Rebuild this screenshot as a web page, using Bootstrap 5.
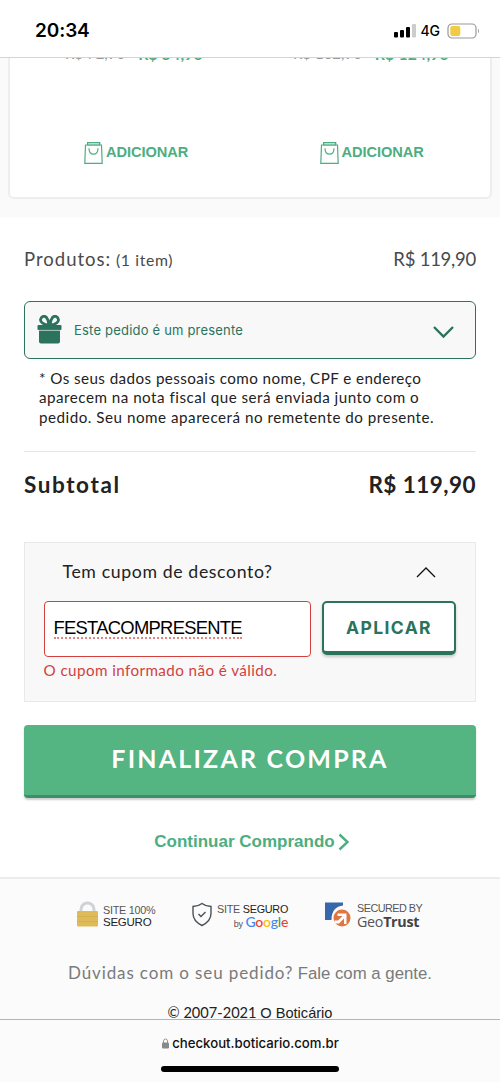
<!DOCTYPE html>
<html lang="pt-BR">
<head>
<meta charset="utf-8">
<meta name="viewport" content="width=device-width, initial-scale=1">
<title>Checkout - O Boticário</title>
<link href="https://cdn.jsdelivr.net/npm/bootstrap@5.3.0/dist/css/bootstrap.min.css" rel="stylesheet">
<style>
  body { font-family: "Lato", sans-serif; color: #222; background: #fff; height: 1082px; overflow: hidden; line-height: 1.2; }
  .helv { font-family: "Liberation Sans", sans-serif; }
  .ui-sans { font-family: "Inter", sans-serif; }
  .green { color: #4cae81; }
  .deep { color: #2b735c; }
  .line { white-space: nowrap; }
  .phone-bar { height: 58px; border-bottom: 1px solid #d2d5d3; padding: 5px 20px 0 35px; }
  .clock { font-size: 19px; font-weight: 600; color: #000; letter-spacing: -.1px; }
  .net { font-size: 14px; font-weight: 500; color: #000; letter-spacing: -.1px; margin: 0 6px 0 4px; }
  .page { height: 961px; }
  .offers { height: 159px; background: #fafafa; padding: 0 8px 18px; }
  .offer-card { border: 2px solid #eee; border-top: 0; border-radius: 0 0 6px 6px; background: #fff; height: 141px; }
  .price { height: 4px; font-size: 15.8px; line-height: 19px; }
  .price > div { margin-top: -14px; }
  .old { color: #999; font-size: 15px; }
  .now { font-weight: 700; margin-left: 13px; letter-spacing: .15px; }
  .add { font-size: 14.6px; font-weight: 700; letter-spacing: -.05px; margin-top: 79px; }
  .add svg { margin-right: 3px; }
  .summary { height: 660px; padding: 0 24px; }
  .products { height: 84px; color: #4a4a4a; font-size: 18.5px; }
  .gift { height: 58px; border: 1.5px solid #2b735c; border-radius: 6px; background: #f8f8f8; padding: 0 21px 0 12px; }
  .gift-text { font-size: 13px; letter-spacing: .2px; padding-top: 2px; }
  .note { font-size: 15.2px; line-height: 19.3px; padding: 10px 0 0 15px; height: 93px; border-bottom: 1px solid #e6e6e6; margin: 0; letter-spacing: .43px; }
  .subtotal { height: 67px; font-size: 22.5px; font-weight: 700; padding-bottom: 2px; }
  .coupon { margin-top: 23px; height: 160px; border: 1.5px solid #e9e9e9; background: #f8f8f8; padding: 0 19px 0 18.5px; }
  .coupon-head { height: 58px; padding: 0 20px 1px 19px; font-size: 17.7px; letter-spacing: .62px; }
  .code-field { width: 267px; height: 56px; border: 1.5px solid #d2413e; border-radius: 4px; background: #fff; font-size: 18.4px; padding: 0 0 1px 9px; color: #000; }
  .typed { border-bottom: 2px dotted #df8480; line-height: 19px; letter-spacing: -.72px; }
  .apply { width: 134px; height: 54px; border: 2px solid #2b735c; border-bottom-width: 4px; border-radius: 5px; background: #fff; font-size: 17.5px; font-weight: 700; letter-spacing: 1.4px; box-shadow: 0 2px 3px #0003; }
  .invalid-note { color: #d2413e; font-size: 15.2px; margin-top: 4px; letter-spacing: .42px; }
  .finish { margin-top: 23px; height: 73px; border: 0; border-bottom: 3px solid #3c9068; border-radius: 4px; background: #54b482; color: #fff; font-weight: 700; font-size: 25px; letter-spacing: 2.2px; box-shadow: 0 2px 2px #0003; }
  .keep { height: 80px; padding: 8px 0 0 4px; font-size: 17px; font-weight: 700; }
  .keep svg { margin-left: 3px; }
  .site-foot { height: 142px; border-top: 2px solid #ececec; background: #fbfbfb; }
  .seal { font-size: 10.8px; line-height: 12px; color: #555; letter-spacing: -.25px; }
  .seal b { font-weight: 400; color: #222; }
  .seals { padding: 22px 0 0 76px; height: 54px; }
  .help { margin-top: 30px; color: #7a7a7a; font-size: 17px; }
  .copy { margin-top: 20px; font-size: 14.6px; color: #222; }
  .browser-bar { height: 63px; border-top: 1px solid #b5b5b5; background: #fbfbfb; }
  .url { font-size: 13.2px; font-weight: 500; color: #111; margin-top: 16px; padding-left: 1px; }
  .home-line { width: 178px; height: 6px; border-radius: 3px; background: #000; margin-top: 14px; }
</style>
</head>
<body class="d-flex flex-column">
<header class="phone-bar d-flex align-items-center justify-content-between flex-shrink-0 ui-sans">
  <span class="clock">20:34</span>
  <div class="d-flex align-items-center">
    <svg width="24" height="15" viewBox="0 0 24 15"><rect x="1" y="9" width="4" height="5.500" rx="1"/><rect x="7" y="7" width="4" height="7.500" rx="1"/><rect x="13" y="4" width="4" height="10.500" rx="1"/><rect x="19" y="1" width="4" height="13.500" rx="1" fill="#ccc"/></svg>
    <span class="net">4G</span>
    <svg width="34" height="16" viewBox="0 0 34 16"><rect x="2" y="1" width="28" height="14" rx="4" fill="#fff" stroke="#999" stroke-width="1.200"/><rect x="4.300" y="3" width="10" height="10" rx="2" fill="#f2cb45"/><path d="M32 5.500q2 2.500 0 5z" fill="#999"/></svg>
  </div>
</header>

<main class="page flex-shrink-0 overflow-hidden">
  <section class="offers">
    <div class="offer-card row g-0">
      <div class="col-6">
        <div class="price overflow-hidden"><div class="d-flex line" style="padding-left:55px"><span class="old">R$ 72,90</span><span class="now green">R$ 54,90</span></div></div>
        <div class="add helv green d-flex align-items-center line" style="padding-left:74px">
          <svg width="19" height="24" viewBox="0 0 19 24" fill="none" stroke="#4cae81" stroke-width="1.200"><path d="M1.500 4h16l.7 18.400H.8zM3.600 4V1.500h12V4M5 7.200c0 4 1.700 6 4.500 6s4.500-2 4.500-6"/><path d="M3.600 1.500h12V4h-12z" fill="#b9dfcc"/></svg><span>ADICIONAR</span></div>
      </div>
      <div class="col-6">
        <div class="price overflow-hidden"><div class="d-flex line" style="padding-left:43px"><span class="old">R$ 162,90</span><span class="now green">R$ 124,90</span></div></div>
        <div class="add helv green d-flex align-items-center line" style="padding-left:69.500px">
          <svg width="19" height="24" viewBox="0 0 19 24" fill="none" stroke="#4cae81" stroke-width="1.200"><path d="M1.500 4h16l.7 18.400H.8zM3.600 4V1.500h12V4M5 7.200c0 4 1.700 6 4.500 6s4.500-2 4.500-6"/><path d="M3.600 1.500h12V4h-12z" fill="#b9dfcc"/></svg><span>ADICIONAR</span></div>
      </div>
    </div>
  </section>

  <section class="summary">
    <div class="products d-flex align-items-center justify-content-between line">
      <span><span style="letter-spacing:1px">Produtos:</span> <span style="font-size:15.800px;letter-spacing:.65px">(1 item)</span></span>
      <span style="letter-spacing:-.25px">R$ 119,90</span>
    </div>
    <div class="gift d-flex align-items-center deep">
      <svg width="25" height="30" viewBox="0 0 25 30" fill="#2b735c"><rect x=".5" y="10" width="24" height="5" rx="1"/><path d="M2 15.500h21V26.500q0 2-2 2H4q-2 0-2-2z"/><path d="M2 15.300h21" stroke="#a9c9bf" stroke-width=".7"/><g fill="none" stroke="#2b735c" stroke-width="2.800" stroke-linejoin="round"><path d="M12 10C6.500 10 3 7 3.600 4.300 4.300 1.300 7.500.3 9.500 2.500c1.700 2 2.300 4.500 2.500 7.500zM13 10c5.500 0 9-3 8.400-5.700C20.700 1.300 17.500.3 15.500 2.500c-1.700 2-2.300 4.500-2.500 7.500z"/></g></svg>
      <span class="gift-text ui-sans line ms-2 me-auto"><span class="ps-1">Este pedido é um presente</span></span>
      <svg class="mt-1" width="21" height="14" viewBox="0 0 21 14" fill="none" stroke="#2b735c" stroke-width="2.400"><path d="M1 2l9.500 9.500L20 2"/></svg>
    </div>
    <p class="note line"><span>* Os seus dados pessoais como nome, CPF e endereço</span><br><span style="letter-spacing:.49px">aparecem na nota fiscal que será enviada junto com o</span><br><span style="letter-spacing:.51px">pedido. Seu nome aparecerá no remetente do presente.</span></p>
    <div class="subtotal d-flex align-items-center justify-content-between line">
      <span style="letter-spacing:1.600px">Subtotal</span><span style="letter-spacing:.45px">R$ 119,90</span>
    </div>
    <div class="coupon">
      <div class="coupon-head d-flex align-items-center justify-content-between line">
        <span>Tem cupom de desconto?</span>
        <svg width="20" height="12" viewBox="0 0 20 12" fill="none" stroke="#111" stroke-width="1.300"><path d="M1 11l9-9 9 9"/></svg>
      </div>
      <div class="d-flex justify-content-between">
        <div class="code-field helv d-flex align-items-center line"><span class="typed">FESTACOMPRESENTE</span></div>
        <button class="apply ui-sans deep p-0">APLICAR</button>
      </div>
      <div class="invalid-note line"><span>O cupom informado não é válido.</span></div>
    </div>
    <button class="finish w-100 p-0 pb-1 d-flex align-items-center justify-content-center line">FINALIZAR COMPRA</button>
    <div class="keep helv green d-flex align-items-center justify-content-center line">Continuar Comprando
      <svg width="12" height="18" viewBox="0 0 12 18" fill="none" stroke="#4cae81" stroke-width="2.400"><path d="M1.500 1.500L9.500 9l-8 7.500"/></svg>
    </div>
  </section>

  <footer class="site-foot">
    <div class="seals d-flex helv">
      <div class="seal d-flex line" style="width:115px">
        <svg width="23" height="27" viewBox="0 0 23 27" class="me-1"><path d="M5 11V8.500a6.500 6.500 0 0 1 13 0V11" fill="none" stroke="#cfd3d4" stroke-width="3"/><rect x="1" y="10" width="21" height="15.500" rx="1" fill="#dfba59"/><path d="M1 15.500h21M1 20.500h21" stroke="#d1aa48" stroke-width=".6"/></svg>
        <span style="padding-top:3px">SITE 100%<br><b style="font-size:11.500px">SEGURO</b></span>
      </div>
      <div class="seal d-flex line" style="width:132px">
        <svg width="22" height="27" viewBox="0 0 22 27" class="me-1" fill="none" stroke="#4b5055" stroke-width="1.400"><path d="M11 2.500c2.500 2 5.500 2.800 9 3v7c0 5.500-4 9.500-9 12-5-2.500-9-6.500-9-12v-7c3.500-.2 6.500-1 9-3zM7.500 13l2.500 2.500 4.500-4.500"/></svg>
        <span class="text-end" style="padding-top:2px">SITE <b>SEGURO</b><br><span style="font-size:9px">by</span> <span style="font:500 14px/13px Lato,sans-serif"><span style="color:#4285f4">G</span><span style="color:#ea4335">o</span><span style="color:#fbbc05">o</span><span style="color:#4285f4">g</span><span style="color:#34a853">l</span><span style="color:#ea4335">e</span></span></span>
      </div>
      <div class="seal d-flex line">
        <svg width="28" height="27" viewBox="0 0 28 27" style="margin-right:6px"><path d="M2 1.500h18v3C13 5 8.500 10 8.500 19H2z" fill="#3569ab"/><circle cx="19" cy="17" r="10" fill="#fbfbfb"/><circle cx="19" cy="17" r="8.500" fill="#df7541"/><path d="M11.500 22.500H16l5-5V23h2.500V12.500h-9V15h5L15 19.500h-3.500" fill="#fbfbfb"/></svg>
        <span style="padding-top:1px;letter-spacing:-.5px">SECURED BY<br><span style="font:14.300px/16px 'Open Sans',sans-serif;letter-spacing:-.3px">Geo<strong style="color:#444">Trust</strong></span></span>
      </div>
    </div>
    <div class="help text-center line"><span style="letter-spacing:.88px">Dúvidas com o seu pedido?</span> <span class="helv" style="font-size:16.800px">Fale com a gente.</span></div>
    <div class="copy text-center line"><span>© 2007-2021</span> <span class="helv">O Boticário</span></div>
  </footer>
</main>

<nav class="browser-bar flex-shrink-0 d-flex flex-column align-items-center ui-sans">
  <div class="url d-flex align-items-center line"><svg width="7" height="11" viewBox="0 0 7 11" style="margin-right:3px"><path d="M1.500 5V3a2 2 0 0 1 4 0v2" fill="none" stroke="#999" stroke-width="1"/><rect y="4.500" width="7" height="6" rx="1" fill="#888"/></svg>checkout.boticario.com.br</div>
  <div class="home-line"></div>
</nav>
<script src="https://cdn.jsdelivr.net/npm/bootstrap@5.3.0/dist/js/bootstrap.bundle.min.js"></script>
</body>
</html>
